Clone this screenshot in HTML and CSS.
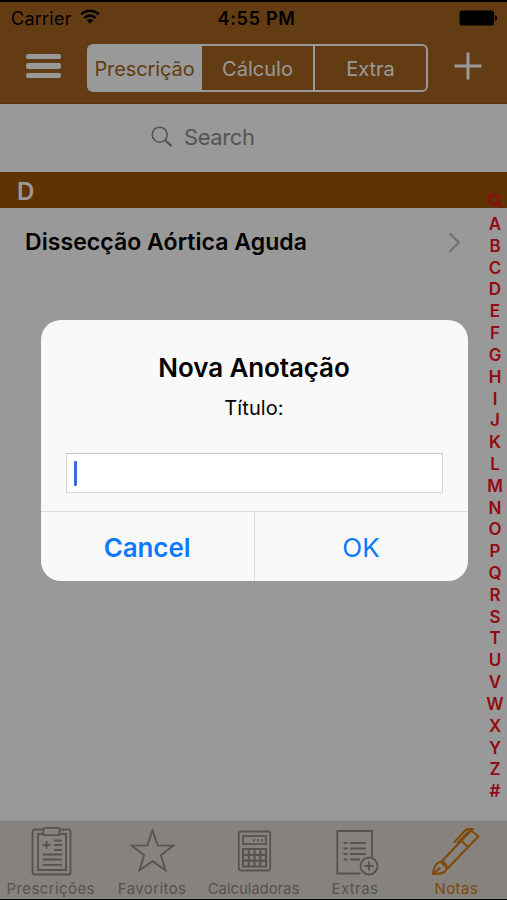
FILE: index.html
```html
<!DOCTYPE html>
<html lang="pt-BR">
<head>
    <meta charset="UTF-8">
    <meta name="viewport" content="width=device-width, initial-scale=1.0">
    <title>Notas</title>
    <link rel="stylesheet" href="styles.css">
</head>
<body>
    <div class="app">
        <header class="header">
            <div class="status-bar">
                <div class="status-left">
                    <span class="carrier">Carrier</span>
                    <svg class="wifi" width="20" height="15" viewBox="0 0 20 15" fill="none" stroke="#000" stroke-width="2.6">
                        <path d="M1.2 5.4a12.6 12.6 0 0 1 17.6 0M4.4 8.9a8 8 0 0 1 11.2 0"/>
                        <path d="M10 14.4 6.8 11.2a4.6 4.6 0 0 1 6.4 0z" fill="#000" stroke="none"/>
                    </svg>
                </div>
                <span class="clock">4:55 PM</span>
                <div class="status-right">
                    <svg width="39" height="16" viewBox="0 0 39 16">
                        <rect x="0.5" y="0.5" width="34.5" height="15" rx="2.5"/>
                        <path d="M36 5c1.4.3 2 1.6 2 3s-.6 2.7-2 3z"/>
                    </svg>
                </div>
            </div>
            <nav class="nav-bar">
                <button class="menu-btn" aria-label="Menu">
                    <span></span>
                    <span></span>
                    <span></span>
                </button>
                <div class="segmented">
                    <button class="segment active">Prescrição</button>
                    <button class="segment">Cálculo</button>
                    <button class="segment">Extra</button>
                </div>
                <button class="add-btn" aria-label="Adicionar">
                    <svg width="28" height="28" viewBox="0 0 28 28" stroke="#fff" stroke-width="3">
                        <path d="M14 .5v27M.5 14h27"/>
                    </svg>
                </button>
            </nav>
        </header>

        <div class="search-bar">
            <svg width="22" height="22" viewBox="0 0 22 22" fill="none" stroke="#8e8e8e">
                <circle cx="8.7" cy="8.7" r="7.5" stroke-width="1.6"/>
                <path d="M14 14l6.5 6.2" stroke-width="2.4"/>
            </svg>
            <span>Search</span>
        </div>

        <main class="content">
            <h2 class="section-header">D</h2>
            <div class="row">
                <span class="row-title">Dissecção Aórtica Aguda</span>
                <svg width="13" height="21" viewBox="0 0 13 21" fill="none" stroke="#c0c0c4" stroke-width="2.3">
                    <path d="M1.5 1.2 10.8 10.5 1.5 19.8"/>
                </svg>
            </div>
            <div class="index">
                <svg width="17" height="17" viewBox="0 0 17 17" fill="none" stroke="#f9101c">
                    <circle cx="7" cy="6.500" r="5" stroke-width="2.200"/>
                    <path d="M10.500 10.300l4.500 4.200" stroke-width="2.800"/>
                </svg>
                <span>A</span><span>B</span><span>C</span><span>D</span><span>E</span><span>F</span><span>G</span><span>H</span><span>I</span><span>J</span><span>K</span><span>L</span><span>M</span><span>N</span><span>O</span><span>P</span><span>Q</span><span>R</span><span>S</span><span>T</span><span>U</span><span>V</span><span>W</span><span>X</span><span>Y</span><span>Z</span><span>#</span>
            </div>
        </main>

        <footer class="tab-bar">
            <div class="tab">
                <svg width="50" height="54" viewBox="0 0 50 54" fill="none" stroke="currentColor" stroke-width="1.8">
                    <path d="M17 3.500H8.500a2 2 0 0 0-2 2v41a2 2 0 0 0 2 2h34a2 2 0 0 0 2-2v-41a2 2 0 0 0-2-2H34"/>
                    <path d="M17 8h-5v36h28V8h-6"/>
                    <rect x="17.500" y="1.800" width="16" height="7.400" rx="1"/>
                    <path d="M16.500 19h8M20.500 15v8M28 14.500h8M28 19h8M28 24h8M16.500 28.500H36M16.500 33.500H36M16.500 38.800H36"/>
                </svg>
                <span>Prescrições</span>
            </div>
            <div class="tab">
                <svg width="50" height="54" viewBox="0 0 50 54" fill="none" stroke="currentColor" stroke-width="1.8">
                    <path d="M25.500 4.500l5.200 14.800 15.600.3-12.400 9.600 4.600 15-13-9-13 9 4.600-15L4.700 19.600l15.600-.3z"/>
                </svg>
                <span>Favoritos</span>
            </div>
            <div class="tab">
                <svg width="50" height="54" viewBox="0 0 50 54" fill="none" stroke="currentColor" stroke-width="1.8">
                    <rect x="9.800" y="5.500" width="31.400" height="39" rx="2.500"/>
                    <rect x="14" y="10" width="23" height="8"/>
                    <path d="M24 14.300h2M28 14.300h2M32 14.300h2" stroke-width="2"/>
                    <path d="M14 23h23v17.500H14zM19.700 23v17.500M25.500 23v17.500M31.300 23v17.500M14 28.800h23M14 34.600h23" stroke-width="2.200"/>
                </svg>
                <span class="tight">Calculadoras</span>
            </div>
            <div class="tab">
                <svg width="50" height="54" viewBox="0 0 50 54" fill="none" stroke="currentColor" stroke-width="1.8">
                    <path d="M30.500 47.500H7.300V5H42v26"/>
                    <path d="M13.500 17h4M13.500 22.500h4M13.500 28h4M13.500 33.500h4M20 17h16M20 22.500h16M20 28h16M20 33.500h10" stroke-width="2"/>
                    <circle cx="39" cy="40" r="8.500"/>
                    <path d="M34.500 40h9M39 35.500v9" stroke-width="2"/>
                </svg>
                <span>Extras</span>
            </div>
            <div class="tab active">
                <svg width="50" height="54" viewBox="0 0 50 54" fill="none" stroke="currentColor" stroke-width="2" stroke-linejoin="round">
                    <path d="M10 36 40 4.500l7.500 5.800L16.500 42.500z"/>
                    <path d="M30.400 14.500l6 6.200"/>
                    <path d="M2 48c.3-4 1.500-7.500 3.500-10 2.500-3 7.500-2.500 9.500.5 2 3.200.5 6.500-2.500 8C9.500 47.800 6 48 2 48zM2 48l7.500-6.500"/>
                    <path d="M23 16.500 33.700 4.800c1.500-1.500 3-1.800 4.500-1.800h4.500M26 17.500 38 5"/>
                </svg>
                <span>Notas</span>
            </div>
        </footer>

        <div class="overlay">
            <div class="alert">
                <div class="alert-body">
                    <h1 class="alert-title">Nova Anotação</h1>
                    <p class="alert-message">Título:</p>
                    <div class="alert-input"><span class="caret"></span></div>
                </div>
                <div class="alert-actions">
                    <button class="alert-btn cancel">Cancel</button>
                    <button class="alert-btn ok">OK</button>
                </div>
            </div>
        </div>
    </div>
</body>
</html>
```
FILE: styles.css
```css
* {
    margin: 0;
    padding: 0;
    box-sizing: border-box;
}

body {
    font-family: Inter, "Liberation Sans", sans-serif;
    background: #000;
    color: #000;
}

button {
    font-family: inherit;
    background: none;
    border: none;
}

.app {
    position: relative;
    width: 507px;
    height: 900px;
    display: flex;
    flex-direction: column;
    border-top: 2px solid #000;
    border-bottom: 1px solid #000;
    background: #fff;
    overflow: hidden;
}

.header {
    height: 102px;
    background: #a56421;
    border-bottom: 1px solid #85501a;
}

.status-bar {
    display: flex;
    align-items: center;
    height: 32px;
    padding: 0 9px 0 11px;
}

.status-left,
.status-right {
    flex: 1;
    display: flex;
    align-items: center;
}

.status-right {
    justify-content: flex-end;
}

.carrier {
    font-size: 18px;
    letter-spacing: 0.25px;
}

.wifi {
    margin: -3px 0 0 8px;
}

.clock {
    padding-left: 4px;
    font-size: 18px;
    font-weight: 600;
    letter-spacing: 0.7px;
}

.nav-bar {
    display: flex;
    align-items: center;
    height: 68px;
    padding: 0 25px 4px 26px;
}

.menu-btn {
    width: 35px;
    display: flex;
    flex-direction: column;
    gap: 4px;
}

.menu-btn span {
    height: 5.5px;
    border-radius: 2px;
    background: #fff;
}

.segmented {
    display: flex;
    width: 341px;
    height: 48px;
    margin: 4px 0 0 26px;
    border: 2px solid #fff;
    border-radius: 6px;
    overflow: hidden;
}

.segment {
    flex: 1;
    padding-top: 1px;
    color: #fff;
    font-size: 20px;
}

.segment + .segment {
    border-left: 2px solid #fff;
}

.segment.active {
    background: #fff;
    color: #a56421;
    letter-spacing: -0.1px;
}

.add-btn {
    margin-left: auto;
    height: 28px;
}

.search-bar {
    display: flex;
    align-items: center;
    height: 68px;
    padding: 0 0 2px 151px;
    gap: 11px;
    background: #fff;
    color: #8e8e8e;
    font-size: 22px;
    letter-spacing: -0.4px;
}

.content {
    flex: 1;
    position: relative;
}

.section-header {
    height: 36px;
    padding-left: 17px;
    background: #a15606;
    color: #fff;
    font-size: 24px;
    font-weight: 600;
    line-height: 39px;
}

.row {
    display: flex;
    align-items: center;
    justify-content: space-between;
    height: 70px;
    padding: 0 46px 2px 25px;
}

.row-title {
    font-size: 23px;
    font-weight: 600;
    letter-spacing: 0.06px;
}

/* alphabet strip floats over the list */
.index {
    position: absolute;
    top: 21px;
    right: 0;
    width: 24px;
    display: flex;
    flex-direction: column;
    align-items: center;
    color: #f9101c;
    font-size: 17px;
    font-weight: 600;
}

.index svg {
    margin-bottom: 4px;
}

.index span {
    height: 21.82px;
    line-height: 21.82px;
}

.tab-bar {
    display: flex;
    height: 78px;
    background: #dfd9d3;
    border-top: 1px solid #d4cec9;
    color: #8f8b87;
}

.tab {
    flex: 1 1 0;
    min-width: 0;
    display: flex;
    flex-direction: column;
    align-items: center;
    padding-top: 4px;
    font-size: 15px;
    letter-spacing: 0.4px;
}

.tab span {
    line-height: 17px;
}

.tab .tight {
    letter-spacing: -0.1px;
}

.tab.active {
    color: #d47a12;
}

.overlay {
    position: absolute;
    inset: 0;
    background: rgba(0, 0, 0, 0.4);
    padding: 318px 39.5px 0 40.5px;
}

.alert {
    height: 261px;
    border-radius: 20px;
    background: #f9f9f9;
    overflow: hidden;
}

.alert-body {
    height: 191px;
    padding: 32px 25px 0;
    text-align: center;
}

.alert-title {
    font-size: 26px;
    font-weight: 600;
    line-height: 32px;
    letter-spacing: -0.1px;
}

.alert-message {
    margin-top: 11px;
    font-size: 20px;
    line-height: 26px;
    letter-spacing: 0.1px;
}

.alert-input {
    display: flex;
    align-items: center;
    height: 40px;
    margin-top: 32px;
    padding-left: 7px;
    background: #fff;
    border: 1px solid #d6d6d6;
    border-top-color: #c2c2c2;
}

.caret {
    width: 3px;
    height: 25px;
    border-radius: 1px;
    background: #3f66df;
}

.alert-actions {
    display: flex;
    height: 70px;
    border-top: 1px solid #dcdcdc;
}

.alert-btn {
    flex: 1;
    padding-top: 2px;
    color: #0a7aff;
    font-size: 26px;
}

.alert-btn + .alert-btn {
    border-left: 1px solid #dcdcdc;
}

.alert-btn.cancel {
    font-weight: 600;
    letter-spacing: -0.1px;
}
```
